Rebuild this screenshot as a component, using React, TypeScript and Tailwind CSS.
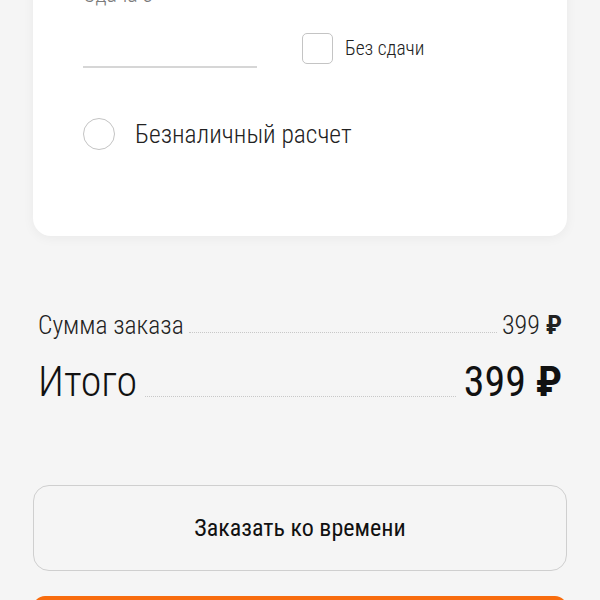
import React from 'react';

const font = { fontFamily: '"Roboto Condensed", "Liberation Sans Narrow", Roboto, sans-serif' };

const App: React.FC = () => {
  return (
    <div className="h-[600px] overflow-hidden bg-[#f5f5f5] px-[33px]" style={font}>
      <div className="-mt-[40px] rounded-[18px] bg-white pb-[86px] pl-[50px] pt-[22px] shadow-[0_2px_12px_rgba(0,0,0,0.05)]">
        <div className="h-[26px] text-[22px] leading-[26px] font-light text-[#7a7a7a]">Сдача с</div>
        <div className="flex items-start">
          <div className="h-[60px] w-[174px] border-b-2 border-[#d6d6d6]" />
          <label className="ml-[45px] mt-[25px] flex items-center gap-[12px]">
            <span className="h-[31px] w-[31px] rounded-[5px] border-[1.5px] border-[#c4c4c4]" />
            <span className="text-[19.5px] leading-[24px] font-light text-[#222]">Без сдачи</span>
          </label>
        </div>
        <label className="mt-[50px] flex items-center gap-[20px]">
          <span className="h-[32px] w-[32px] rounded-full border-[1.5px] border-[#c4c4c4]" />
          <span className="text-[25.5px] leading-[30px] font-light text-[#222]">Безналичный расчет</span>
        </label>
      </div>

      <div className="mt-[74px] flex flex-col px-[5px]">
        <div className="flex items-end">
          <span className="text-[25.5px] leading-[30px] font-light text-[#222]">Сумма заказа</span>
          <span className="mx-[5px] mb-[7px] flex-1 border-b border-dotted border-[#c8c8c8]" />
          <span className="text-[26px] leading-[30px] font-light text-[#222]">
            399 <span className="font-bold">₽</span>
          </span>
        </div>
        <div className="mt-[18px] flex items-end">
          <span className="text-[42px] leading-[48px] font-light text-[#111]">Итого</span>
          <span className="mx-[8px] mb-[9px] flex-1 border-b border-dotted border-[#c8c8c8]" />
          <span className="text-[42px] leading-[48px] font-normal text-[#111]">
            399 <span className="font-bold">₽</span>
          </span>
        </div>
      </div>

      <button className="mt-[79px] flex h-[86px] w-full items-center justify-center rounded-[16px] border-[1.5px] border-[#cfcfcf] text-[24px] font-normal text-[#111]">
        Заказать ко времени
      </button>
      <div className="mt-[25px] h-[60px] rounded-t-[12px] bg-[#f86c0e]" />
    </div>
  );
};

export default App;
